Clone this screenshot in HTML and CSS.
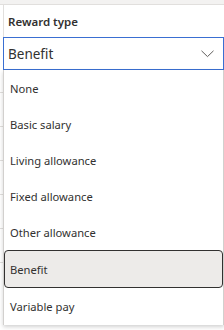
FILE: index.html
```html
<!DOCTYPE html>
<html lang="en">
<head>
  <meta charset="UTF-8">
  <title>Reward type</title>
  <link rel="stylesheet" href="styles.css">
</head>
<body>
  <div class="topbar"></div>
  <div class="page">
    <div class="gutter"></div>
    <div class="field">
      <div class="field-label">Reward type</div>
      <div class="select">
        <span class="select-value">Benefit</span>
        <svg class="chevron" width="13" height="8" viewBox="0 0 13 8">
          <path d="M0.5 0.8 L6.5 6.6 L12.5 0.8" fill="none" stroke="#605e5c" stroke-width="1"/>
        </svg>
      </div>
      <ul class="listbox">
        <li class="option">None</li>
        <li class="option">Basic salary</li>
        <li class="option">Living allowance</li>
        <li class="option">Fixed allowance</li>
        <li class="option">Other allowance</li>
        <li class="option selected">Benefit</li>
        <li class="option">Variable pay</li>
      </ul>
    </div>
  </div>
</body>
</html>
```

FILE: styles.css
```css
body, ul, li, div {
  margin: 0;
  padding: 0;
}

body {
  width: 224px;
  height: 330px;
  overflow: hidden;
  background: #fff;
  font-family: "Noto Sans", "Open Sans", sans-serif;
  color: #323130;
}

.topbar {
  height: 4px;
  background: #f3f2f1;
  border-bottom: 1px solid #e1dfdd;
}

.page {
  display: flex;
  height: 325px;
}

.gutter {
  width: 3px;
  flex: none;
  background: repeating-linear-gradient(to bottom, #fff 0, #fff 87px, #e1dfdd 87px, #e1dfdd 88px, #fff 88px, #fff 121px, #e1dfdd 121px, #e1dfdd 122px, #fff 122px, #fff 155px, #e1dfdd 155px, #e1dfdd 156px, #fff 156px, #fff 189px, #e1dfdd 189px, #e1dfdd 190px, #fff 190px, #fff 223px, #e1dfdd 223px, #e1dfdd 224px, #fff 224px, #fff 257px, #e1dfdd 257px, #e1dfdd 258px, #fff 258px, #fff 325px);
}

.field {
  width: 221px;
  display: flex;
  flex-direction: column;
}

.field-label {
  height: 32px;
  box-sizing: border-box;
  padding: 9px 0 0 4px;
  border-left: 1px solid #e1dfdd;
  font-size: 11.5px;
  font-weight: 600;
}

.select {
  height: 33px;
  box-sizing: border-box;
  border: 1px solid #3a6fd2;
  display: flex;
  align-items: center;
  justify-content: space-between;
  padding: 0 9px 0 4px;
}

.select-value {
  font-size: 13.5px;
}

.chevron {
  display: block;
}

.listbox {
  list-style: none;
  height: 255px;
  box-sizing: border-box;
  border-left: 1px solid #d2d0ce;
  border-right: 1px solid #d2d0ce;
  box-shadow: 0 2px 4px rgba(0, 0, 0, 0.18);
}

.option {
  height: 36px;
  display: flex;
  align-items: center;
  padding-left: 6px;
  font-size: 11.2px;
  box-sizing: border-box;
}

.option.selected {
  background: #edebe9;
  border: 1px solid #323130;
  border-radius: 4px;
  height: 38px;
  padding-left: 5px;
}
```
